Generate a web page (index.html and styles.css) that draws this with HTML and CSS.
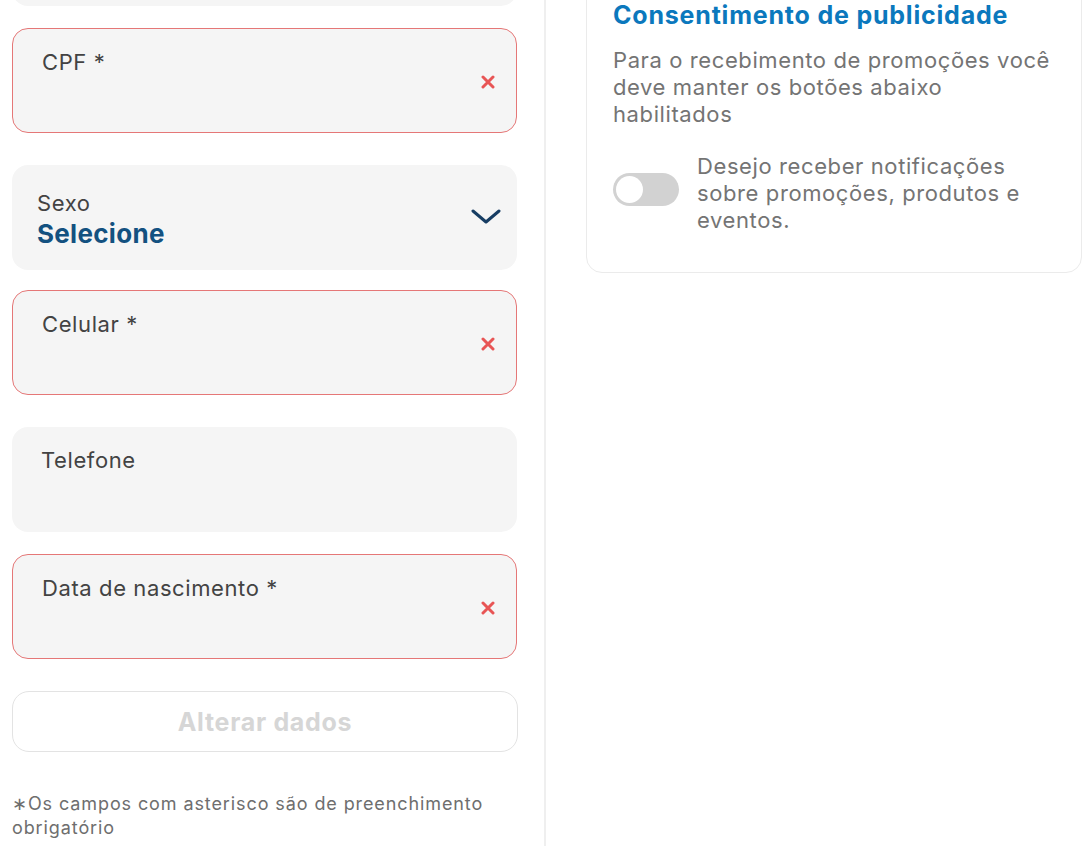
FILE: index.html
```html
<!DOCTYPE html>
<html lang="pt-BR">
<head>
<meta charset="utf-8">
<title>Meus dados</title>
<link rel="stylesheet" href="styles.css">
</head>
<body>
<div class="page">
  <section class="form-col">
    <div class="field"></div>
    <div class="field error">
      <span class="label">CPF *</span>
      <svg class="err-icon" viewBox="0 0 14 14" width="14" height="14"><path d="M2 2 L12 12 M12 2 L2 12" stroke="#e85555" stroke-width="3" stroke-linecap="round"/></svg>
    </div>
    <div class="field select">
      <div class="select-text">
        <span class="label small">Sexo</span>
        <span class="value">Selecione</span>
      </div>
      <svg class="chevron" viewBox="0 0 30 16" width="30" height="16"><path d="M2 2 L15 13 L28 2" fill="none" stroke="#173d63" stroke-width="3" stroke-linecap="round" stroke-linejoin="round"/></svg>
    </div>
    <div class="field error">
      <span class="label">Celular *</span>
      <svg class="err-icon" viewBox="0 0 14 14" width="14" height="14"><path d="M2 2 L12 12 M12 2 L2 12" stroke="#e85555" stroke-width="3" stroke-linecap="round"/></svg>
    </div>
    <div class="field">
      <span class="label">Telefone</span>
    </div>
    <div class="field error">
      <span class="label">Data de nascimento *</span>
      <svg class="err-icon" viewBox="0 0 14 14" width="14" height="14"><path d="M2 2 L12 12 M12 2 L2 12" stroke="#e85555" stroke-width="3" stroke-linecap="round"/></svg>
    </div>
    <button class="submit" type="button" disabled>Alterar dados</button>
    <p class="note">∗Os campos com asterisco são de preenchimento obrigatório</p>
  </section>
  <section class="side-col">
    <div class="card">
      <h2 class="card-title">Consentimento de publicidade</h2>
      <p class="card-text">Para o recebimento de promoções você deve manter os botões abaixo habilitados</p>
      <div class="toggle-row">
        <span class="toggle"><span class="knob"></span></span>
        <span class="toggle-text">Desejo receber notificações sobre promoções, produtos e eventos.</span>
      </div>
    </div>
  </section>
</div>
</body>
</html>
```

FILE: styles.css
```css
html, body {
  margin: 0;
  padding: 0;
  background: #ffffff;
  font-family: Inter, "Noto Sans", Arial, sans-serif;
  overflow: hidden;
}

.page {
  display: flex;
  align-items: stretch;
  margin-top: -99px;
  min-height: 960px;
}

.form-col {
  width: 532px;
  padding-left: 12px;
  border-right: 2px solid #efefef;
  display: flex;
  flex-direction: column;
}

.field {
  box-sizing: border-box;
  width: 505px;
  height: 105px;
  background: #f5f5f5;
  border-radius: 16px;
  margin-bottom: 22px;
  padding: 19px 21px 19px 29px;
  display: flex;
  justify-content: space-between;
  align-items: flex-start;
}

.field.error {
  border: 1.5px solid #e57777;
  margin-bottom: 32px;
}

.label {
  font-size: 22px;
  letter-spacing: 0.6px;
  color: #434343;
  line-height: 28px;
}

.err-icon {
  margin-top: 27px;
}

.field.select {
  padding: 23px 16px 18px 25px;
  align-items: center;
  margin-bottom: 20px;
}

.select-text {
  display: flex;
  flex-direction: column;
}

.label.small {
  line-height: 28px;
}

.value {
  font-size: 26px;
  letter-spacing: 0.3px;
  font-weight: 700;
  color: #135180;
  line-height: 34px;
}

.chevron {
  margin-top: -6px;
}

.submit {
  box-sizing: border-box;
  width: 506px;
  height: 61px;
  background: #ffffff;
  border: 1.5px solid #e3e3e3;
  border-radius: 17px;
  font-family: Inter, "Noto Sans", Arial, sans-serif;
  font-size: 25px;
  letter-spacing: 0.7px;
  font-weight: 700;
  color: #d6d6d6;
  padding: 0;
}

.note {
  margin: 40px 0 0 0;
  width: 500px;
  font-size: 18px;
  letter-spacing: 0.9px;
  line-height: 24px;
  color: #6e6e6e;
}

.side-col {
  flex: 1;
  padding-left: 40px;
  padding-right: 3px;
}

.card {
  box-sizing: border-box;
  margin-top: 70px;
  border: 1.5px solid #ebebeb;
  border-radius: 16px;
  padding: 28px 22px 38px 26px;
}

.card-title {
  margin: 0;
  font-size: 25px;
  letter-spacing: 0.8px;
  font-weight: 700;
  color: #0b78bd;
  line-height: 30px;
}

.card-text {
  margin: 17px 0 0 0;
  font-size: 22px;
  letter-spacing: 0.6px;
  line-height: 27px;
  color: #747474;
}

.toggle-row {
  display: flex;
  align-items: center;
  gap: 18px;
  margin-top: 25px;
}

.toggle {
  flex: none;
  width: 66px;
  height: 33px;
  margin-top: -8px;
  border-radius: 17px;
  background: #d2d2d2;
  display: flex;
  align-items: center;
  padding-left: 3px;
  box-sizing: border-box;
}

.knob {
  width: 27px;
  height: 27px;
  border-radius: 50%;
  background: #ffffff;
}

.toggle-text {
  font-size: 22px;
  letter-spacing: 0.6px;
  line-height: 27px;
  color: #747474;
}
```
